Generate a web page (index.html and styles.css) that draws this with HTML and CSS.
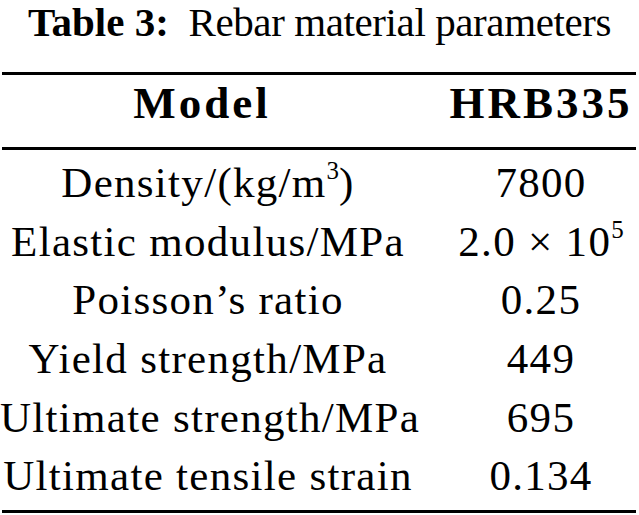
FILE: index.html
```html
<!DOCTYPE html>
<html>
<head>
<meta charset="utf-8">
<link rel="stylesheet" href="styles.css">
</head>
<body>
<div class="page">
  <div class="caption"><b>Table 3:</b>&nbsp; Rebar material parameters</div>
  <div class="rule"></div>
  <div class="row head"><div class="c1">Model</div><div class="c2">HRB335</div></div>
  <div class="rule"></div>
  <div class="body">
    <div class="row"><div class="c1">Density/(kg/m<sup>3</sup>)</div><div class="c2">7800</div></div>
    <div class="row"><div class="c1">Elastic modulus/MPa</div><div class="c2">2.0 × 10<sup>5</sup></div></div>
    <div class="row"><div class="c1">Poisson’s ratio</div><div class="c2">0.25</div></div>
    <div class="row"><div class="c1">Yield strength/MPa</div><div class="c2">449</div></div>
    <div class="row"><div class="c1">Ultimate strength/MPa</div><div class="c2">695</div></div>
    <div class="row"><div class="c1">Ultimate tensile strain</div><div class="c2">0.134</div></div>
  </div>
  <div class="rule"></div>
</div>
</body>
</html>
```
FILE: styles.css
```css
html, body { margin: 0; padding: 0; background: #fff; }
.page {
  width: 639px;
  font-family: "Liberation Serif", "Times New Roman", serif;
  color: #000;
}
.caption {
  font-size: 41px;
  line-height: 45.4px;
  height: 72px;
  text-align: center;
  white-space: nowrap;
  letter-spacing: -0.4px;
}
.caption b { font-weight: bold; letter-spacing: 0; }
.rule { height: 3px; background: #000; margin-left: 2px; margin-right: 3px; }
.row {
  display: grid;
  grid-template-columns: 416px 1fr;
  font-size: 43px;
  line-height: 58.6px;
  height: 58.6px;
  letter-spacing: 1.3px;
}
.row.head {
  font-weight: bold;
  font-size: 45px;
  line-height: 57.6px;
  height: 72px;
  letter-spacing: 3px;
}
.row.head .c1 { padding-right: 12px; }
.body { padding-top: 4.2px; padding-bottom: 4.2px; }
.c1 { text-align: center; white-space: nowrap; }
.c2 { text-align: center; padding-left: 27px; white-space: nowrap; }
sup { font-size: 0.58em; line-height: 0; vertical-align: 0.72em; letter-spacing: 0; }
```
